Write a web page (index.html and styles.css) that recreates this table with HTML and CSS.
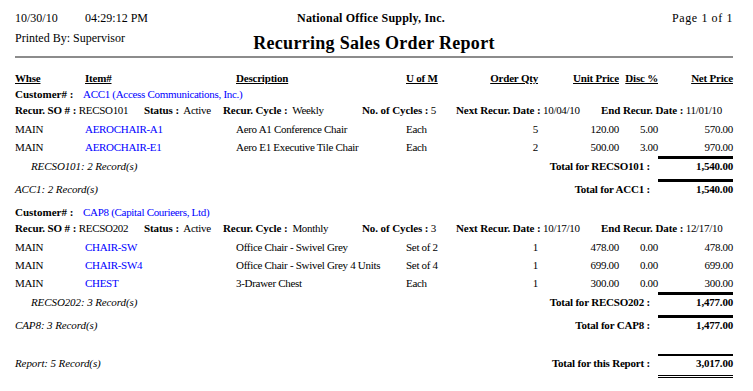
FILE: index.html
```html
<!DOCTYPE html>
<html>
<head>
<meta charset="utf-8">
<title>Recurring Sales Order Report</title>
<link rel="stylesheet" href="styles.css">
</head>
<body>
<div class="report">
  <header class="top">
    <div class="stamp"><span class="date">10/30/10</span><span>04:29:12 PM</span></div>
    <div class="company">National Office Supply, Inc.</div>
    <div class="page">Page 1 of 1</div>
    <div class="printed">Printed By: Supervisor</div>
    <h1 class="title">Recurring Sales Order Report</h1>
    <div></div>
  </header>
  <div class="rule"></div>

  <div class="cols heads">
    <span>Whse</span>
    <span>Item#</span>
    <span>Description</span>
    <span>U of M</span>
    <span class="num">Order Qty</span>
    <span class="num">Unit Price</span>
    <span class="num">Disc %</span>
    <span class="num">Net Price</span>
  </div>

  <section class="cust">
    <div class="cust-row"><b class="cust-label">Customer# :</b><span class="link">ACC1 (Access Communications, Inc.)</span></div>
    <div class="recur">
      <span><b>Recur. SO # :</b> RECSO101</span>
      <span><b>Status :</b>&nbsp; Active</span>
      <span><b>Recur. Cycle :</b>&nbsp; Weekly</span>
      <span><b>No. of Cycles :</b> 5</span>
      <span><b>Next Recur. Date :</b> 10/04/10</span>
      <span><b>End Recur. Date :</b> 11/01/10</span>
    </div>
    <div class="items">
      <div class="cols item">
        <span>MAIN</span><span class="link">AEROCHAIR-A1</span><span>Aero A1 Conference Chair</span><span>Each</span>
        <span class="num">5</span><span class="num">120.00</span><span class="num">5.00</span><span class="num">570.00</span>
      </div>
      <div class="cols item">
        <span>MAIN</span><span class="link">AEROCHAIR-E1</span><span>Aero E1 Executive Tile Chair</span><span>Each</span>
        <span class="num">2</span><span class="num">500.00</span><span class="num">3.00</span><span class="num">970.00</span>
      </div>
    </div>
    <div class="total">
      <i class="count indent">RECSO101: 2 Record(s)</i>
      <b class="tlabel">Total for RECSO101 :</b>
      <b class="tval">1,540.00</b>
    </div>
    <div class="total cust-total">
      <i class="count">ACC1: 2 Record(s)</i>
      <b class="tlabel">Total for ACC1 :</b>
      <b class="tval">1,540.00</b>
    </div>
  </section>

  <section class="cust next">
    <div class="cust-row"><b class="cust-label">Customer# :</b><span class="link">CAP8 (Capital Courieers, Ltd)</span></div>
    <div class="recur">
      <span><b>Recur. SO # :</b> RECSO202</span>
      <span><b>Status :</b>&nbsp; Active</span>
      <span><b>Recur. Cycle :</b>&nbsp; Monthly</span>
      <span><b>No. of Cycles :</b> 3</span>
      <span><b>Next Recur. Date :</b> 10/17/10</span>
      <span><b>End Recur. Date :</b> 12/17/10</span>
    </div>
    <div class="items">
      <div class="cols item">
        <span>MAIN</span><span class="link">CHAIR-SW</span><span>Office Chair - Swivel Grey</span><span>Set of 2</span>
        <span class="num">1</span><span class="num">478.00</span><span class="num">0.00</span><span class="num">478.00</span>
      </div>
      <div class="cols item">
        <span>MAIN</span><span class="link">CHAIR-SW4</span><span>Office Chair - Swivel Grey 4 Units</span><span>Set of 4</span>
        <span class="num">1</span><span class="num">699.00</span><span class="num">0.00</span><span class="num">699.00</span>
      </div>
      <div class="cols item">
        <span>MAIN</span><span class="link">CHEST</span><span>3-Drawer Chest</span><span>Each</span>
        <span class="num">1</span><span class="num">300.00</span><span class="num">0.00</span><span class="num">300.00</span>
      </div>
    </div>
    <div class="total">
      <i class="count indent">RECSO202: 3 Record(s)</i>
      <b class="tlabel">Total for RECSO202 :</b>
      <b class="tval">1,477.00</b>
    </div>
    <div class="total cust-total">
      <i class="count">CAP8: 3 Record(s)</i>
      <b class="tlabel">Total for CAP8 :</b>
      <b class="tval">1,477.00</b>
    </div>
  </section>

  <div class="total grand">
    <i class="count">Report: 5 Record(s)</i>
    <b class="tlabel">Total for this Report :</b>
    <b class="tval">3,017.00</b>
  </div>
</div>
</body>
</html>
```

FILE: styles.css
```css
html, body {
  margin: 0;
  padding: 0;
  background: #ffffff;
}

body {
  font-family: "Liberation Serif", "Times New Roman", serif;
  color: #000000;
  font-size: 11px;
}

.report {
  margin-left: 15px;
  width: 718px;
}

.top {
  display: grid;
  grid-template-columns: 1fr auto 1fr;
  align-items: start;
  padding-top: 10px;
  font-size: 12px;
  line-height: 16px;
}

.stamp {
  display: flex;
}

.date {
  width: 70px;
}

.company {
  font-weight: bold;
  text-align: center;
  letter-spacing: 0.2px;
  padding-right: 6px;
}

.page {
  text-align: right;
  letter-spacing: 0.6px;
}

.printed {
  margin-top: 4px;
  line-height: 17px;
}

.title {
  margin: 6px 0 0 0;
  font-size: 18px;
  line-height: 22px;
  font-weight: bold;
  text-align: center;
  letter-spacing: 0.3px;
}

.rule {
  margin-top: 2px;
  height: 2px;
  background: #8c8c8c;
}

.cols {
  display: grid;
  grid-template-columns: 70px 151px 170px 64px 68px 81px 39px 75px;
  white-space: nowrap;
}

.num {
  text-align: right;
}

.heads {
  margin-top: 12px;
  line-height: 16px;
  font-weight: bold;
  text-decoration: underline;
  letter-spacing: -0.2px;
}

.cust-row {
  display: flex;
  line-height: 16px;
}

.cust-label {
  width: 68px;
}

.link {
  color: #0000ff;
  letter-spacing: -0.3px;
}

.recur {
  display: grid;
  grid-template-columns: 129px 79px 139px 94px 145px 1fr;
  line-height: 16px;
  white-space: nowrap;
}

.recur span {
  letter-spacing: -0.3px;
}

.recur b {
  letter-spacing: -0.1px;
}

.items {
  margin-top: 2px;
}

.item {
  line-height: 18px;
  letter-spacing: -0.3px;
}

.total {
  display: grid;
  grid-template-columns: 391px 1fr 75px;
  align-items: end;
  line-height: 14px;
  white-space: nowrap;
}

.count {
  letter-spacing: -0.1px;
}

.count.indent {
  padding-left: 16px;
}

.tlabel {
  text-align: right;
  padding-right: 8px;
  letter-spacing: -0.2px;
}

.tval {
  text-align: right;
  border-top: 3px solid #000000;
  letter-spacing: -0.2px;
}

.cust-total {
  margin-top: 6px;
}

.next {
  margin-top: 8px;
}

.grand {
  margin-top: 22px;
}

.grand .tval {
  border-top: 2px solid #000000;
  border-bottom: 3px double #000000;
  padding-bottom: 5px;
}

.grand .count,
.grand .tlabel {
  padding-bottom: 8px;
}
```
